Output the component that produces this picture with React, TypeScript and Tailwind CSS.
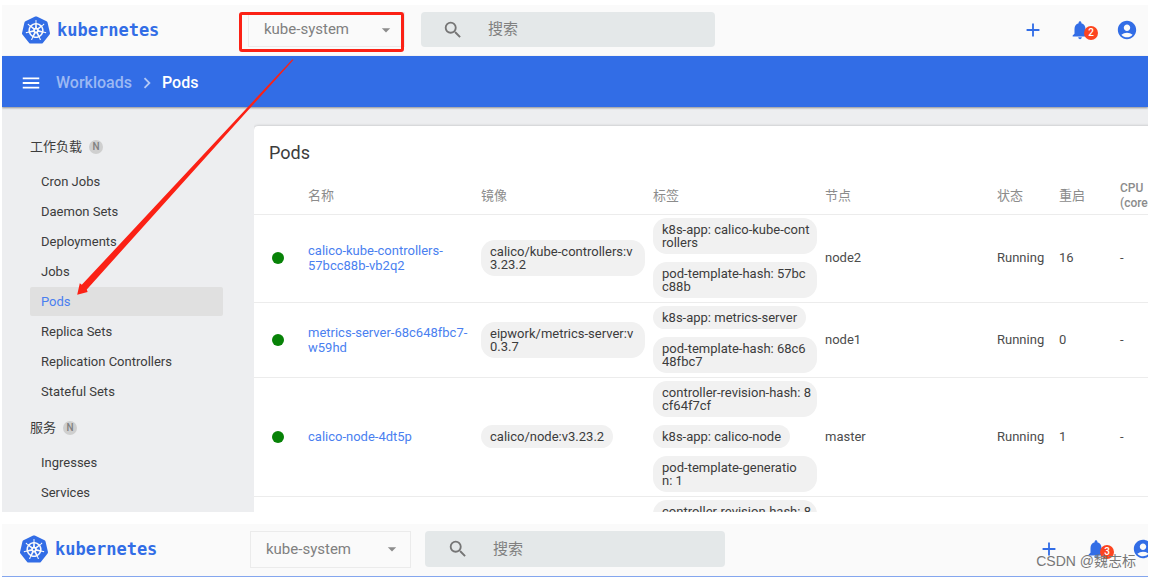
import React from "react";
import clsx from "clsx";
import { SiKubernetes } from "react-icons/si";
import {
  MdAccountCircle,
  MdAdd,
  MdArrowDropDown,
  MdChevronRight,
  MdMenu,
  MdNotifications,
  MdSearch,
} from "react-icons/md";

type Line = string[];

interface Pod {
  name: string;
  images: Line[];
  labels: Line[];
  node: string;
  status: string;
  restarts: string;
  cpu: string;
}

const pods: Pod[] = [
  {
    name: "calico-kube-controllers-57bcc88b-vb2q2",
    images: [["calico/kube-controllers:v", "3.23.2"]],
    labels: [
      ["k8s-app: calico-kube-cont", "rollers"],
      ["pod-template-hash: 57bc", "c88b"],
    ],
    node: "node2",
    status: "Running",
    restarts: "16",
    cpu: "-",
  },
  {
    name: "metrics-server-68c648fbc7-w59hd",
    images: [["eipwork/metrics-server:v", "0.3.7"]],
    labels: [["k8s-app: metrics-server"], ["pod-template-hash: 68c6", "48fbc7"]],
    node: "node1",
    status: "Running",
    restarts: "0",
    cpu: "-",
  },
  {
    name: "calico-node-4dt5p",
    images: [["calico/node:v3.23.2"]],
    labels: [
      ["controller-revision-hash: 8", "cf64f7cf"],
      ["k8s-app: calico-node"],
      ["pod-template-generatio", "n: 1"],
    ],
    node: "master",
    status: "Running",
    restarts: "1",
    cpu: "-",
  },
];

const groups = [
  {
    title: "工作负载",
    items: [
      "Cron Jobs",
      "Daemon Sets",
      "Deployments",
      "Jobs",
      "Pods",
      "Replica Sets",
      "Replication Controllers",
      "Stateful Sets",
    ],
  },
  { title: "服务", items: ["Ingresses", "Services"] },
];

function Chip({ lines }: { lines: Line }) {
  return (
    <div
      className={clsx(
        "rounded-[14px] bg-[#f1f1f1] px-[9px] py-[5px] leading-[13px] whitespace-nowrap text-[#3c3c3c]",
        lines.length > 1 ? "w-[164px]" : "w-fit",
      )}
    >
      {lines.map((line) => (
        <div key={line}>{line}</div>
      ))}
    </div>
  );
}

function Toolbar({ id, count, wide = false }: { id: string; count: number; wide?: boolean }) {
  return (
    <header
      className={clsx(
        "flex shrink-0 items-center bg-[#fafafa] pb-[2px] text-[#326de6]",
        wide ? "h-[52px] pl-[18px]" : "h-[51px] pr-[10px] pl-[20px]",
      )}
    >
      <a href="#" className={clsx("flex shrink-0 items-center gap-[7px]", wide ? "w-[230px]" : "w-[226px]")}>
        <SiKubernetes size={28} />
        <span className="font-['DejaVu_Sans_Mono',monospace] text-[17px] leading-6 font-bold">kubernetes</span>
      </a>
      <div
        className={clsx(
          "relative flex shrink-0 items-center border border-[#ebebeb]",
          wide ? "h-[37px] w-[161px]" : "h-[35px] w-[157px]",
        )}
      >
        <select
          aria-label="Namespace"
          className="h-full w-full appearance-none bg-transparent pl-[15px] text-[15px] text-[#808080] outline-none"
        >
          <option>kube-system</option>
        </select>
        <MdArrowDropDown size={20} className="pointer-events-none absolute right-[8px] text-[#8c8c8c]" />
        {!wide && (
          <span className="pointer-events-none absolute -top-px right-0 -bottom-[6px] -left-[10px] rounded-[3px] border-3 border-[#fb2115]" />
        )}
      </div>
      <label
        htmlFor={id}
        className={clsx(
          "flex shrink-0 items-center gap-[24px] rounded-sm bg-[#e4e8e9]",
          wide ? "ml-[14px] h-[36px] w-[300px] pl-[22px]" : "ml-[16px] h-[35px] w-[294px] pl-[21px]",
        )}
      >
        <MdSearch size={22} className="shrink-0 text-[#757575]" />
        <input
          id={id}
          aria-label="搜索"
          placeholder="搜索"
          className="w-full min-w-0 bg-transparent text-[15px] text-[#757575] outline-none placeholder:text-[#808080]"
        />
      </label>
      <div className={clsx("ml-auto flex shrink-0 items-center", wide ? "-mr-[6px] gap-[25px]" : "gap-[25px]")}>
        <button aria-label="Create">
          <MdAdd size={22} />
        </button>
        <button aria-label="Notifications" className="relative">
          <MdNotifications size={22} />
          <span className="absolute top-[7px] left-[15px] flex size-[14px] items-center justify-center rounded-full bg-[#fc4420] text-[10px] leading-none font-medium text-white">
            {count}
          </span>
        </button>
        <button aria-label="Account">
          <MdAccountCircle size={22} />
        </button>
      </div>
    </header>
  );
}

function Sidebar() {
  return (
    <nav className="w-[252px] shrink-0 pt-[19px] pr-[31px] pl-[28px] text-[#3c3c3c]">
      {groups.map((group) => (
        <section key={group.title}>
          <h2 className="flex h-[41px] items-center gap-[7px]">
            {group.title}
            <span className="flex size-[14px] items-center justify-center rounded-full bg-[#cfcfcf] text-[10px] leading-none font-medium text-[#808080]">
              N
            </span>
          </h2>
          <ul>
            {group.items.map((item) => (
              <li key={item} className="h-[30px]">
                <a
                  href="#"
                  className={clsx(
                    "flex h-[29px] items-center rounded-xs px-[11px]",
                    item === "Pods" && "bg-[#e0e0e0] text-[#4a7ff0]",
                  )}
                >
                  {item}
                </a>
              </li>
            ))}
          </ul>
        </section>
      ))}
    </nav>
  );
}

function PodTable() {
  return (
    <main className="min-w-0 flex-1 overflow-hidden pt-[19px]">
      <div className="h-full min-w-[960px] rounded-tl-sm bg-white shadow-[0_0_3px_rgba(0,0,0,0.25)]">
        <h1 className="flex h-[52px] items-center pl-[15px] text-[18px] text-[#3c3c3c]">Pods</h1>
        <table className="w-full table-fixed border-collapse text-left text-[#4c4c4c]">
          <colgroup>
            <col className="w-[54px]" />
            <col className="w-[173px]" />
            <col className="w-[172px]" />
            <col className="w-[172px]" />
            <col className="w-[172px]" />
            <col className="w-[62px]" />
            <col className="w-[61px]" />
            <col />
          </colgroup>
          <thead>
            <tr className="h-[36px] border-b border-[#ececec] leading-[15px] text-[#8c8c8c]">
              <th aria-label="Health" />
              <th className="font-normal">名称</th>
              <th className="font-normal">镜像</th>
              <th className="font-normal">标签</th>
              <th className="font-normal">节点</th>
              <th className="font-normal">状态</th>
              <th className="font-normal">重启</th>
              <th className="text-[12px] font-medium">
                CPU
                <br />
                (cores)
              </th>
            </tr>
          </thead>
          <tbody>
            {pods.map((pod) => (
              <tr key={pod.name} className="border-b border-[#ececec]">
                <td>
                  <div className="ml-[18px] size-[12px] rounded-full bg-[#078207]" />
                </td>
                <td className="pr-3 leading-[15px]">
                  <a href="#" className="text-[#4a7ff0]">
                    {pod.name}
                  </a>
                </td>
                <td>
                  {pod.images.map((image) => (
                    <Chip key={image[0]} lines={image} />
                  ))}
                </td>
                <td className="pt-[3px] pb-1">
                  <div className="flex flex-col gap-2">
                    {pod.labels.map((label) => (
                      <Chip key={label[0]} lines={label} />
                    ))}
                  </div>
                </td>
                <td>{pod.node}</td>
                <td>{pod.status}</td>
                <td>{pod.restarts}</td>
                <td>{pod.cpu}</td>
              </tr>
            ))}
            <tr>
              <td colSpan={3} />
              <td className="pt-[3px]">
                <Chip lines={["controller-revision-hash: 8", "cf64f7cf"]} />
              </td>
              <td colSpan={4} />
            </tr>
          </tbody>
        </table>
      </div>
    </main>
  );
}

export default function App() {
  return (
    <div className="flex h-screen flex-col gap-3 overflow-hidden bg-white pt-[5px] pr-[3px] pl-[2px] font-[Roboto,'Noto_Sans_CJK_SC',sans-serif] text-[13px]">
      <div className="relative flex min-h-0 flex-1 flex-col overflow-hidden">
        <Toolbar id="search-top" count={2} />
        <div className="z-10 flex h-[51px] shrink-0 items-center bg-[#326de6] pt-[3px] pl-[18px] text-[16px] font-medium text-white shadow-[0_1px_2px_rgba(0,0,0,0.4)]">
          <button aria-label="Menu">
            <MdMenu size={22} />
          </button>
          <a href="#" className="ml-[14px] text-[#9bb8f3]">
            Workloads
          </a>
          <MdChevronRight size={22} className="mx-1 text-[#b3c9f6]" />
          <span>Pods</span>
        </div>
        <div className="flex min-h-0 flex-1 overflow-hidden bg-[#edeef0]">
          <Sidebar />
          <PodTable />
        </div>
        <svg
          className="pointer-events-none absolute top-[53px] left-[73px] z-20"
          width="222"
          height="240"
          viewBox="75 58 222 240"
          fill="#fb2115"
          aria-hidden="true"
        >
          <path d="M292.4 59.2 L293.4 60 L86.8 289.4 L87.6 292 L77.2 294.7 L79.8 283.3 L81.8 284.8 Z" />
        </svg>
      </div>
      <div className="relative shrink-0 overflow-hidden border-b border-[#84a6ee]">
        <Toolbar id="search-bottom" count={3} wide />
        <span className="pointer-events-none absolute right-[12px] bottom-[5px] text-[14px] leading-5 text-[#777] font-['Liberation_Sans','Noto_Sans_CJK_SC',sans-serif]">
          CSDN @魏志标
        </span>
      </div>
    </div>
  );
}
